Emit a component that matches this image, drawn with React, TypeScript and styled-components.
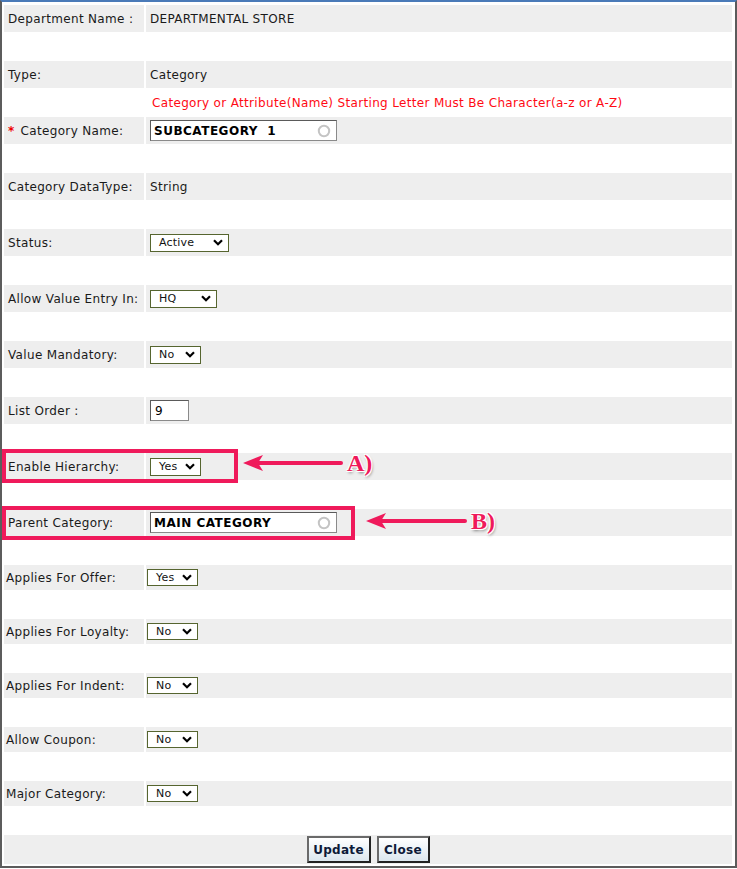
import styled, { createGlobalStyle } from 'styled-components';

const GlobalStyle = createGlobalStyle`
  html, body {
    margin: 0;
    padding: 0;
    background: #fff;
  }
  body {
    font-family: "DejaVu Sans", Verdana, sans-serif;
    font-size: 12px;
    letter-spacing: 0.33px;
    color: #1a1a1a;
  }
`;

const Frame = styled.div`
  box-sizing: border-box;
  width: 737px;
  height: 868px;
  border: 2px solid #5c5c5c;
  border-top-color: #4a7ab8;
  padding: 3px 3px 2px 2px;
  display: flex;
  flex-direction: column;
`;

const Row = styled.div<{ $h?: number; $gap?: number }>`
  position: relative;
  display: grid;
  grid-template-columns: 140px 1fr;
  column-gap: 2px;
  height: ${p => p.$h ?? 27}px;
  margin-bottom: ${p => p.$gap ?? 29}px;
`;

const Cell = styled.div<{ $pad?: number }>`
  background: #eeeeee;
  display: flex;
  align-items: center;
  padding-left: ${p => p.$pad ?? 4}px;
  white-space: nowrap;
`;

const NoticeRow = styled.div`
  display: grid;
  grid-template-columns: 140px 1fr;
  column-gap: 2px;
  height: 29px;
`;

const Notice = styled.div`
  grid-column: 2;
  display: flex;
  align-items: center;
  padding-left: 6px;
  color: #ff0a14;
  white-space: nowrap;
`;

const Required = styled.span`
  color: #e00;
  font-weight: bold;
  margin-right: 6px;
`;

const SelectBox = styled.div<{ $w: number; $h?: number }>`
  box-sizing: border-box;
  width: ${p => p.$w}px;
  height: ${p => p.$h ?? 18}px;
  border: 1px solid #56652f;
  background: #fff;
  display: flex;
  align-items: center;
  justify-content: space-between;
  padding: 0 5px 0 8px;
  font-size: 11px;
  letter-spacing: 0.2px;
  color: #111;
`;

const TextBox = styled.div<{ $w: number; $bold?: boolean }>`
  box-sizing: border-box;
  width: ${p => p.$w}px;
  height: 21px;
  border: 1px solid #8a8a8a;
  border-top-color: #5a5a5a;
  border-left-color: #5a5a5a;
  background: #fff;
  display: flex;
  align-items: center;
  justify-content: space-between;
  padding: 0 5px 0 3px;
  font-weight: ${p => (p.$bold ? 'bold' : 'normal')};
  letter-spacing: ${p => (p.$bold ? '0.5px' : '0.33px')};
  color: #000;
  white-space: pre;
`;

const ButtonBar = styled.div`
  height: 29px;
  background: #eeeeee;
  display: flex;
  align-items: center;
  justify-content: center;
  gap: 6px;
`;

const Button = styled.button<{ $w: number }>`
  box-sizing: border-box;
  width: ${p => p.$w}px;
  height: 27px;
  font-family: "DejaVu Sans", Verdana, sans-serif;
  font-size: 12px;
  font-weight: bold;
  letter-spacing: 0.3px;
  color: #0d1a38;
  background: linear-gradient(#ffffff, #dbe6ee);
  border: 2px solid;
  border-color: #6a6a6a #222 #222 #6a6a6a;
  padding: 0;
`;

const Highlight = styled.div<{ $w: number; $top: number }>`
  position: absolute;
  left: -2px;
  top: ${p => p.$top}px;
  width: ${p => p.$w}px;
  height: 34px;
  box-sizing: border-box;
  border: 4px solid #ef1a5b;
  pointer-events: none;
`;

const Callout = styled.div<{ $left: number; $top: number }>`
  position: absolute;
  left: ${p => p.$left}px;
  top: ${p => p.$top}px;
  height: 20px;
  display: flex;
  align-items: center;
  gap: 4px;
`;

const CalloutTag = styled.span`
  font-family: "Liberation Serif", "Times New Roman", serif;
  font-weight: bold;
  font-size: 24px;
  line-height: 20px;
  letter-spacing: 0;
  color: #ef1a5b;
  text-shadow: -1px -1px 0 #fff, 1px -1px 0 #fff, -1px 1px 0 #fff, 1px 1px 0 #fff,
    1px 2px 3px rgba(0, 0, 0, 0.45);
`;

const Chevron = () => (
  <svg width="10" height="7" viewBox="0 0 10 7">
    <polyline points="1,1.2 5,5.2 9,1.2" fill="none" stroke="#000" strokeWidth="2.2" />
  </svg>
);

const Spinner = () => (
  <svg width="14" height="14" viewBox="0 0 14 14">
    <circle cx="7" cy="7" r="5.2" fill="none" stroke="#c4c4c4" strokeWidth="2" />
  </svg>
);

const Arrow = ({ width }: { width: number }) => (
  <svg width={width} height="20" viewBox={`0 0 ${width} 20`}>
    <line x1="14" y1="10" x2={width - 2} y2="10" stroke="#ef1a5b" strokeWidth="4" strokeLinecap="round" />
    <path d="M0 10 L20 2 L15 10 L20 18 Z" fill="#ef1a5b" />
  </svg>
);

const Select = ({ value, width, height }: { value: string; width: number; height?: number }) => (
  <SelectBox $w={width} $h={height}>
    <span>{value}</span>
    <Chevron />
  </SelectBox>
);

const lowerRows = [
  'Applies For Offer:',
  'Applies For Loyalty:',
  'Applies For Indent:',
  'Allow Coupon:',
  'Major Category:',
];

export default function App() {
  return (
    <>
      <GlobalStyle />
      <Frame>
        <Row>
          <Cell>Department Name :</Cell>
          <Cell>DEPARTMENTAL STORE</Cell>
        </Row>
        <Row $gap={0}>
          <Cell>Type:</Cell>
          <Cell>Category</Cell>
        </Row>
        <NoticeRow>
          <Notice>Category or Attribute(Name) Starting Letter Must Be Character(a-z or A-Z)</Notice>
        </NoticeRow>
        <Row>
          <Cell>
            <Required>*</Required>Category Name:
          </Cell>
          <Cell>
            <TextBox $w={187} $bold>
              <span>SUBCATEGORY  1</span>
              <Spinner />
            </TextBox>
          </Cell>
        </Row>
        <Row>
          <Cell>Category DataType:</Cell>
          <Cell>String</Cell>
        </Row>
        <Row>
          <Cell>Status:</Cell>
          <Cell>
            <Select value="Active" width={79} />
          </Cell>
        </Row>
        <Row>
          <Cell>Allow Value Entry In:</Cell>
          <Cell>
            <Select value="HQ" width={67} />
          </Cell>
        </Row>
        <Row>
          <Cell>Value Mandatory:</Cell>
          <Cell>
            <Select value="No" width={51} />
          </Cell>
        </Row>
        <Row>
          <Cell>List Order :</Cell>
          <Cell>
            <TextBox $w={39} style={{ paddingLeft: 4 }}>9</TextBox>
          </Cell>
        </Row>
        <Row>
          <Cell>Enable Hierarchy:</Cell>
          <Cell>
            <Select value="Yes" width={51} />
          </Cell>
          <Highlight $w={236} $top={-4} />
          <Callout $left={239} $top={0}>
            <Arrow width={100} />
            <CalloutTag>A)</CalloutTag>
          </Callout>
        </Row>
        <Row>
          <Cell>Parent Category:</Cell>
          <Cell>
            <TextBox $w={187} $bold>
              <span>MAIN CATEGORY</span>
              <Spinner />
            </TextBox>
          </Cell>
          <Highlight $w={353} $top={-3} />
          <Callout $left={362} $top={2}>
            <Arrow width={101} />
            <CalloutTag>B)</CalloutTag>
          </Callout>
        </Row>
        {lowerRows.map((label, i) => (
          <Row key={label} $h={25}>
            <Cell $pad={2}>{label}</Cell>
            <Cell $pad={1}>
              <Select value={i === 0 ? 'Yes' : 'No'} width={51} height={17} />
            </Cell>
          </Row>
        ))}
        <ButtonBar>
          <Button $w={64}>Update</Button>
          <Button $w={53}>Close</Button>
        </ButtonBar>
      </Frame>
    </>
  );
}
